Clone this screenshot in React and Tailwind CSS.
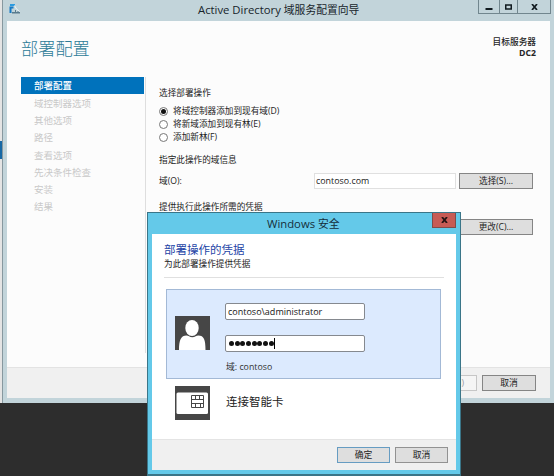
import React from 'react';

const steps = ['域控制器选项', '其他选项', '路径', '查看选项', '先决条件检查', '安装', '结果'];

const operations = [
  { label: '将域控制器添加到现有域(D)', checked: true },
  { label: '将新域添加到现有林(E)', checked: false },
  { label: '添加新林(F)', checked: false },
];

function Radio({ label, checked }) {
  return (
    <label className="flex h-[13px] items-center gap-[5px] leading-[13px]">
      <span className="flex size-[9px] items-center justify-center rounded-full border border-[#777] bg-white">
        {checked && <span className="size-[5px] rounded-full bg-[#111]" />}
      </span>
      <span>{label}</span>
    </label>
  );
}

function Button({ children, className }) {
  return (
    <button type="button" className={`flex h-4 items-center justify-center border bg-[#dedede] pt-px ${className}`}>
      {children}
    </button>
  );
}

function WizardIcon() {
  return (
    <svg className="h-[12px] w-[12px]" viewBox="0 0 12 12">
      <path d="M1 1h5v2H1z" fill="#2c9be0" />
      <path d="M0.5 3.6h4v1.8h-2v4.6H0.5z" fill="#1479c4" />
      <path d="M5.5 2.5l2 3.5 3 2.5" stroke="#eef6f9" strokeWidth="1" fill="none" />
      <path d="M3 9h8v1.5H3zM6 7h1v3H6zM8.5 8h1v2h-1z" fill="#587b8e" />
    </svg>
  );
}

function WindowControls() {
  return (
    <div className="flex h-[14px] w-[73px] border-x border-b border-[#71868e]">
      <div className="flex w-[21px] items-center justify-center border-r border-[#71868e]">
        <svg width="8" height="8" viewBox="0 0 8 8"><path d="M.5 5h7v2h-7z" fill="#111b20" /></svg>
      </div>
      <div className="flex w-[18px] items-center justify-center border-r border-[#71868e]">
        <svg width="7" height="6" viewBox="0 0 7 6"><path d="M.75 1h5.5v4H.75z" fill="none" stroke="#111b20" strokeWidth="1.5" /></svg>
      </div>
      <div className="flex flex-1 items-center justify-center">
        <svg width="7" height="6" viewBox="0 0 7 6"><path d="M1 0l5 6M6 0L1 6" stroke="#111b20" strokeWidth="1.7" /></svg>
      </div>
    </div>
  );
}

function WizardWindow() {
  return (
    <section className="flex h-[403px] w-[552px] flex-col border-l border-[#87989f] bg-[#c2d4da] pr-[4px] pb-[5px] pl-[4px]">
      <header className="flex h-[21px] shrink-0 items-start">
        <div className="w-[45px] pt-[3px] pl-[2px]"><WizardIcon /></div>
        <h1 className="flex-1 pl-[146px] text-[10.8px] leading-[19px] whitespace-nowrap text-[#17242a]">
          <span className="text-[11.3px]">Active Directory </span>域服务配置向导
        </h1>
        <div className="-mr-[1px]"><WindowControls /></div>
      </header>

      <main className="flex h-[346px] flex-col bg-[#fcfcfc]">
        <div className="flex h-[56px] justify-between pr-[14px] pl-[14px]">
          <h2 className="pt-[16px] text-[17.2px] leading-6 font-light text-[#2c7b98]">部署配置</h2>
          <div className="pt-[16px] text-right text-[8.7px] leading-[11px] font-bold text-[#252525]">
            <div className="font-medium">目标服务器</div>
            <div>DC2</div>
          </div>
        </div>

        <div className="flex flex-1">
          <nav className="ml-[14px] h-[276px] w-[125px] border-r border-[#dedede] pr-px text-[9.5px] text-[#c9c9c9]">
            <div className="h-[17px] bg-[#0072bc] pl-[13px] leading-[18px] font-medium text-white">部署配置</div>
            {steps.map((step) => (
              <div key={step} className="h-[17.2px] pl-[13px] leading-[19px]">{step}</div>
            ))}
          </nav>

          <div className="flex w-[389px] flex-col pt-[10px] pl-[13px] text-[8.65px] text-[#222]">
            <p className="h-[18px] leading-[13px]">选择部署操作</p>
            <div>
              {operations.map((operation) => <Radio key={operation.label} {...operation} />)}
            </div>
            <p className="mt-[10px] leading-[13px]">指定此操作的域信息</p>
            <div className="mt-[6px] flex h-4 items-center">
              <span className="w-[155px]">域(O):</span>
              <div className="mr-[3px] flex h-4 w-[142px] items-center border border-[#e0e0e0] bg-white pl-[1px] text-[8.9px]">contoso.com</div>
              <Button className="w-[74px] border-[#858585]">选择(S)...</Button>
            </div>
            <p className="mt-[12px] leading-[13px]">提供执行此操作所需的凭据</p>
            <div className="mt-[5px] flex justify-end pr-[2px]">
              <Button className="w-[74px] border-[#858585]">更改(C)...</Button>
            </div>
          </div>
        </div>
      </main>

      <footer className="flex h-[31px] justify-end gap-[5px] border-t border-[#e3e3e3] bg-[#f0f0f0] pt-[7px] pr-[14px] text-[8.8px] text-[#222]">
        <Button className="w-[54px] justify-end border-[#c6c6c6] !bg-[#f5f5f5] pr-[12px] text-[#999]">安装(I)</Button>
        <Button className="w-[54px] border-[#858585]">取消</Button>
      </footer>
    </section>
  );
}

function UserTile() {
  return (
    <svg className="h-[34px] w-[35px]" viewBox="0 0 35 34">
      <rect width="35" height="34" fill="#464646" />
      <ellipse cx="17" cy="12" rx="6.7" ry="8" fill="#fff" />
      <path d="M4 34c0-10 2-14.5 7.5-14.5 2 0 3 1.7 5.8 1.7s4-1.7 6-1.7c5.7 0 7.2 4.5 7.2 14.5z" fill="#fff" />
    </svg>
  );
}

function SmartCardTile() {
  return (
    <svg className="h-[34px] w-[35px]" viewBox="0 0 35 34">
      <rect width="35" height="34" fill="#464646" />
      <rect x="1.5" y="6.5" width="31.5" height="21.5" rx="1.5" fill="#fff" />
      <path d="M16.5 9.5h12v12h-12zM16.5 13.5h12M16.5 17.5h12M20.5 9.5v4M24.5 9.5v4M20.5 17.5v4M25.5 17.5v4" fill="none" stroke="#464646" strokeWidth="1" />
    </svg>
  );
}

function CredentialDialog() {
  return (
    <section className="absolute top-[212px] left-[147px] flex h-[264px] w-[314px] flex-col border border-b-2 border-[#3a7588] bg-[#64c9e9] px-[4px] pb-[4px]">
      <header className="flex h-[21px] shrink-0">
        <h2 className="flex-1 pl-[115px] text-[10.8px] leading-[21px] text-[#152e3a]">
          <span className="text-[11.3px]">Windows </span>安全
        </h2>
        <div className="flex h-[15px] w-[24px] items-center justify-center border border-t-0 border-[#814b49] bg-[#c75b55]">
          <svg width="7" height="6" viewBox="0 0 7 6"><path d="M1 0l5 6M6 0L1 6" stroke="#231313" strokeWidth="1.8" /></svg>
        </div>
      </header>

      <main className="flex h-[205px] flex-col bg-white px-[12px] pt-[7px]">
        <h3 className="text-[11.5px] leading-[17px] text-[#2444a6]">部署操作的凭据</h3>
        <p className="text-[8.65px] leading-[12px] text-[#222]">为此部署操作提供凭据</p>
        <div className="mt-[7px] border-t border-[#e0e0e0]" />
        <div className="mt-[11px] mr-[3px] ml-[2px] flex h-[90px] border border-[#a3b9d6] bg-[#dceafe] pl-[8px]">
          <div className="mt-[26px] w-[50px]"><UserTile /></div>
          <div className="pt-[13px] text-[#151515]">
            <div className="flex h-[17px] w-[140px] items-center rounded-[2px] border border-[#85898f] bg-white pl-[2px] text-[9px]">contoso\administrator</div>
            <div className="mt-[15px] flex h-[17px] w-[140px] items-center rounded-[2px] border border-[#85898f] bg-white pl-[3px]">
              <div className="flex gap-[0.7px]">
                {Array.from({ length: 8 }, (_, i) => <span key={i} className="size-[5px] rounded-full bg-[#111]" />)}
              </div>
              <span className="h-[11px] w-px bg-black" />
            </div>
            <p className="mt-[9px] pl-px text-[8.8px] leading-[13px] text-[#333]">域: contoso</p>
          </div>
        </div>
        <div className="mt-[7px] ml-[11px] flex items-center">
          <SmartCardTile />
          <span className="ml-[16px] pb-[3px] text-[11.5px] leading-[17px] text-[#222]">连接智能卡</span>
        </div>
      </main>

      <footer className="flex h-[31px] justify-end gap-[5px] border-t border-[#e4e4e4] bg-[#f0f0f0] pt-[7px] pr-[8px] text-[8.8px] text-[#222]">
        <Button className="w-[53px] border-[#669cc2]">确定</Button>
        <Button className="w-[53px] border-[#929292]">取消</Button>
      </footer>
    </section>
  );
}

export default function App() {
  return (
    <div className="relative h-[476px] w-[554px] overflow-hidden bg-[#2d2d2d] font-['Open_Sans','Noto_Sans_CJK_SC',sans-serif]">
      <div className="flex h-[403px]">
        <div className="h-full w-[2px] bg-[#e4e4e4] pt-[141px]">
          <div className="h-[18px] bg-[#1768a5]" />
        </div>
        <WizardWindow />
      </div>
      <CredentialDialog />
    </div>
  );
}
